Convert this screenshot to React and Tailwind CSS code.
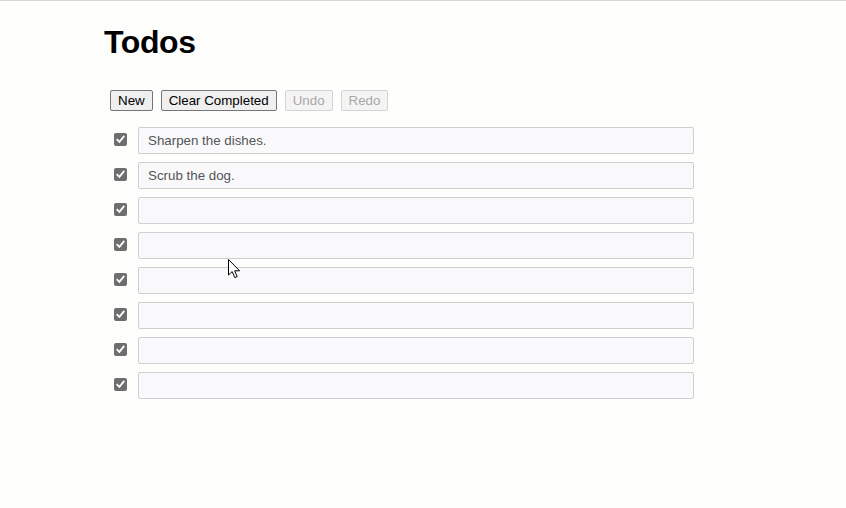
import React from "react";

const todos = ["Sharpen the dishes.", "Scrub the dog.", "", "", "", "", "", ""];

function Check() {
  return (
    <span className="mt-[6px] ml-[10px] flex h-[13px] w-[13px] shrink-0 items-center justify-center rounded-[2px] bg-[#6e6e6e]">
      <svg width="9" height="9" viewBox="0 0 9 9">
        <path d="M1.3 4.8 L3.4 6.9 L7.7 1.6" fill="none" stroke="#fff" strokeWidth="1.8" strokeLinecap="square" />
      </svg>
    </span>
  );
}

function Btn({ children, disabled }) {
  return (
    <button
      type="button"
      disabled={disabled}
      className={
        disabled
          ? "h-[21px] rounded-[2px] border border-[#d3d3d3] bg-[#f4f4f4] px-[7px] text-[13.33px] leading-[15px] text-[#a8a8a8]"
          : "h-[21px] rounded-[2px] border border-[#767676] bg-[#efefef] px-[7px] text-[13.33px] leading-[15px] text-black"
      }
    >
      {children}
    </button>
  );
}

export default function App() {
  return (
    <div className="relative min-h-screen w-full bg-[#fefefd] font-['Liberation_Sans',Arial,sans-serif]">
      <div className="h-px w-full bg-[#d6d6da]" />
      <div className="pl-[104px]">
        <h1 className="mt-[23px] text-[32px] font-bold leading-[37px] tracking-[-0.4px] text-black">Todos</h1>

        <div className="mt-[29px] flex gap-2 pl-[6px]">
          <Btn>New</Btn>
          <Btn>Clear Completed</Btn>
          <Btn disabled>Undo</Btn>
          <Btn disabled>Redo</Btn>
        </div>

        <div className="mt-[16px] flex flex-col gap-2">
          {todos.map((t, i) => (
            <div key={i} className="flex h-[27px] items-start">
              <Check />
              <input
                readOnly
                defaultValue={t}
                className="ml-[11px] h-[27px] w-[556px] rounded-[2px] border border-[#cfcfcf] bg-[#f9f9fb] px-[9px] text-[13.33px] text-[#555] outline-none"
              />
            </div>
          ))}
        </div>
      </div>

      <svg className="absolute left-[228px] top-[259px]" width="14" height="20" viewBox="0 0 14 20">
        <path
          d="M0.5 0.5 L0.5 16 L4.2 12.6 L6.8 18.6 L9.2 17.6 L6.7 11.8 L11.6 11.8 Z"
          fill="#fff"
          stroke="#000"
          strokeWidth="1"
          strokeLinejoin="miter"
        />
      </svg>
    </div>
  );
}
